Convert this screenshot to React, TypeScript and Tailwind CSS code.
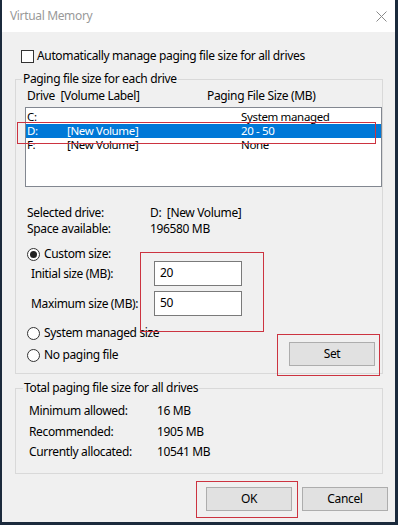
import React from 'react';

const font = { fontFamily: '"Noto Sans", "Open Sans", sans-serif' };

const Radio = ({ checked }: { checked?: boolean }) => (
  <span className="w-[13px] h-[13px] rounded-full border border-[#333] bg-white flex items-center justify-center shrink-0">
    {checked && <span className="w-[7px] h-[7px] rounded-full bg-[#222]" />}
  </span>
);

const Button = ({ label }: { label: string }) => (
  <div className="w-[86px] h-[24px] bg-[#e1e1e1] border border-[#adadad] flex items-center justify-center text-black">
    {label}
  </div>
);

const drives = [
  { drive: 'C:', label: '', size: 'System managed' },
  { drive: 'D:', label: '[New Volume]', size: '20 - 50', selected: true },
  { drive: 'F:', label: '[New Volume]', size: 'None' },
];

const totals = [
  ['Minimum allowed:', '16 MB', 'mt-[7px]'],
  ['Recommended:', '1905 MB', 'mt-[5px]'],
  ['Currently allocated:', '10541 MB', 'mt-[4px]'],
];

const App = () => {
  return (
    <div className="w-[398px] h-[525px] bg-[#1b2a3c] pl-[2px] pr-[3px] pb-[3px] flex text-[12px] leading-[16px] tracking-[-0.35px] text-black" style={font}>
      <div className="flex-1 flex flex-col bg-[#f0f0f0]">
        {/* title bar */}
        <div className="h-[32px] bg-white flex items-center justify-between pl-[8px] pr-[8px]">
          <span className="text-[#999] text-[12px]">Virtual Memory</span>
          <svg width="11" height="11" viewBox="0 0 11 11" className="mt-[1px]">
            <path d="M0.5 0.5 L10.5 10.5 M10.5 0.5 L0.5 10.5" stroke="#8a8a8a" strokeWidth="1" fill="none" />
          </svg>
        </div>

        {/* body */}
        <div className="relative flex-1 flex flex-col pt-[16px]">
          <div className="h-[16px] flex items-center ml-[19px] gap-[3px]">
            <span className="w-[13px] h-[13px] border border-[#333] bg-white shrink-0" />
            <span>Automatically manage paging file size for all drives</span>
          </div>

          <fieldset className="mt-[7px] ml-[13px] w-[368px] border border-[#d9d9d9] pb-[7px]">
            <legend className="ml-[6px] px-[1px] leading-[16px]">Paging file size for each drive</legend>
            <div className="pl-[9px]">
              <div className="mt-[1px] flex pl-[2px]">
                <span className="w-[180px]">Drive&nbsp;&nbsp;[Volume Label]</span>
                <span>Paging File Size (MB)</span>
              </div>
              <div className="mt-[3px] h-[80px] border border-[#828790] bg-white pt-[2px]">
                {drives.map((d) => (
                  <div
                    key={d.drive}
                    className={`h-[14px] flex items-center pl-[1px] text-[11.5px] ${d.selected ? 'bg-[#0078d7] text-white' : ''}`}
                  >
                    <span className="w-[40px] h-[14px] leading-[14px] inline-block">{d.drive}</span>
                    <span className="w-[174px] h-[14px] leading-[14px] inline-block">{d.label}</span>
                    <span className="h-[14px] leading-[14px] inline-block">{d.size}</span>
                  </div>
                ))}
              </div>

              <div className="mt-[18px] flex pl-[2px]">
                <span className="w-[123px]">Selected drive:</span>
                <span>D:&nbsp;&nbsp;[New Volume]</span>
              </div>
              <div className="flex pl-[2px]">
                <span className="w-[123px]">Space available:</span>
                <span>196580 MB</span>
              </div>

              <div className="mt-[10px] h-[14px] flex items-center gap-[4px] pl-[2px]">
                <Radio checked />
                <span>Custom size:</span>
              </div>
              <div className="h-[25px] flex items-center pl-[6px]">
                <span className="w-[123px]">Initial size (MB):</span>
                <div className="w-[88px] h-[25px] border border-[#7a7a7a] bg-white pl-[5px] pt-[3px]">20</div>
              </div>
              <div className="mt-[5px] h-[25px] flex items-center pl-[6px]">
                <span className="w-[123px]">Maximum size (MB):</span>
                <div className="w-[88px] h-[25px] border border-[#7a7a7a] bg-white pl-[5px] pt-[3px]">50</div>
              </div>

              <div className="mt-[6px] flex justify-between items-end pr-[7px]">
                <div className="flex flex-col pl-[2px]">
                  <div className="h-[22px] flex items-center gap-[4px]">
                    <Radio />
                    <span>System managed size</span>
                  </div>
                  <div className="h-[22px] flex items-center gap-[4px]">
                    <Radio />
                    <span>No paging file</span>
                  </div>
                </div>
                <Button label="Set" />
              </div>
            </div>
          </fieldset>

          <fieldset className="mt-[6px] ml-[13px] w-[368px] border border-[#d9d9d9] pb-[13px]">
            <legend className="ml-[7px] px-[1px] leading-[16px]">Total paging file size for all drives</legend>
            <div className="pl-[13px]">
              {totals.map(([k, v, m]) => (
                <div key={k} className={`flex ${m}`}>
                  <span className="w-[128px]">{k}</span>
                  <span>{v}</span>
                </div>
              ))}
            </div>
          </fieldset>

          <div className="mt-[13px] flex justify-end gap-[10px] mr-[7px]">
            <Button label="OK" />
            <Button label="Cancel" />
          </div>

          {/* red annotation boxes */}
          <div className="absolute left-[15px] top-[90px] w-[359px] h-[22px] border border-[#cc3340]" />
          <div className="absolute left-[138px] top-[220px] w-[124px] h-[80px] border border-[#cc3340]" />
          <div className="absolute left-[275px] top-[302px] w-[103px] h-[42px] border border-[#cc3340]" />
          <div className="absolute left-[194px] top-[449px] w-[102px] h-[37px] border border-[#cc3340]" />
        </div>
      </div>
    </div>
  );
};

export default App;
